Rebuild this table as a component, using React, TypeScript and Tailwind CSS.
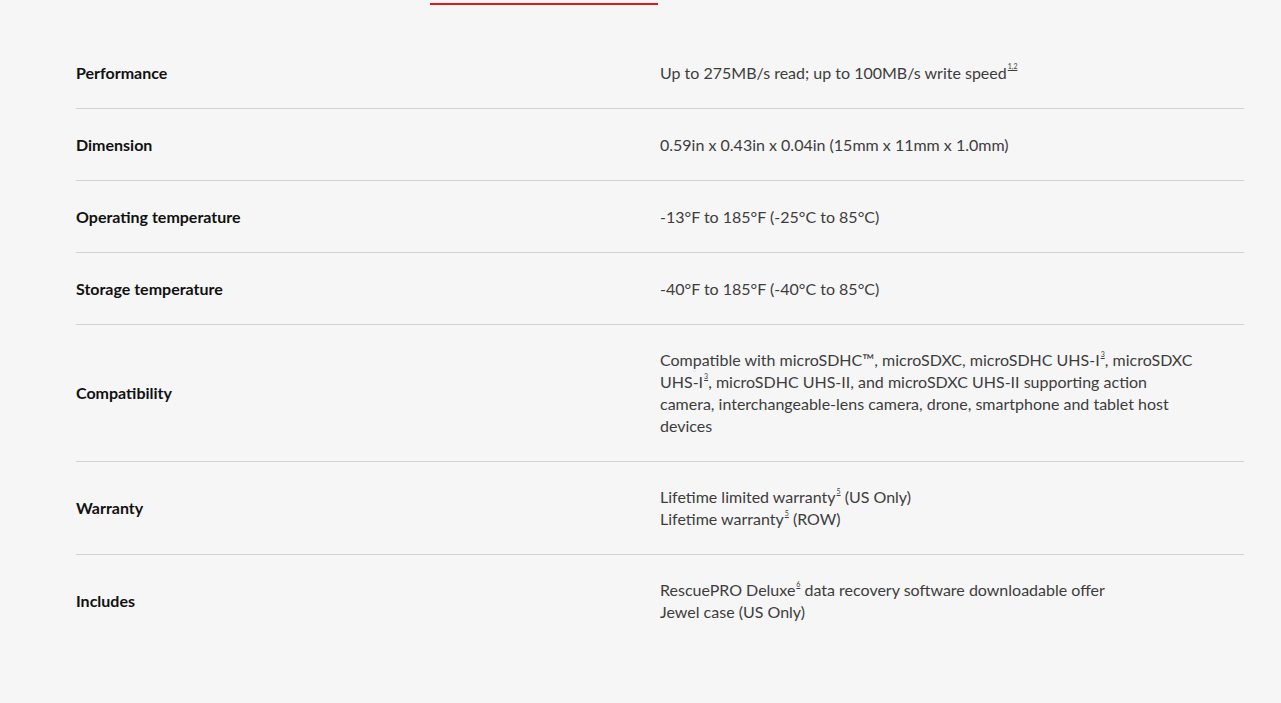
import type { ReactNode } from "react";

type Spec = { label: string; value: ReactNode };

function Note({ n }: { n: string }) {
  return <sup className="ml-[1px] align-top text-[7px] leading-[16px] underline">{n}</sup>;
}

const specs: Spec[] = [
  {
    label: "Performance",
    value: (
      <>
        Up to 275MB/s read; up to 100MB/s write speed
        <Note n="1,2" />
      </>
    ),
  },
  { label: "Dimension", value: "0.59in x 0.43in x 0.04in (15mm x 11mm x 1.0mm)" },
  { label: "Operating temperature", value: "-13°F to 185°F (-25°C to 85°C)" },
  { label: "Storage temperature", value: "-40°F to 185°F (-40°C to 85°C)" },
  {
    label: "Compatibility",
    value: (
      <>
        Compatible with microSDHC™, microSDXC, microSDHC UHS-I
        <Note n="3" />, microSDXC UHS-I
        <Note n="3" />, microSDHC UHS-II, and microSDXC UHS-II supporting action camera,
        interchangeable-lens camera, drone, smartphone and tablet host devices
      </>
    ),
  },
  {
    label: "Warranty",
    value: (
      <>
        <div>
          Lifetime limited warranty
          <Note n="5" /> (US Only)
        </div>
        <div>
          Lifetime warranty
          <Note n="5" /> (ROW)
        </div>
      </>
    ),
  },
  {
    label: "Includes",
    value: (
      <>
        <div>
          RescuePRO Deluxe
          <Note n="6" /> data recovery software downloadable offer
        </div>
        <div>Jewel case (US Only)</div>
      </>
    ),
  },
];

export default function App() {
  return (
    <div className="min-h-[703px] bg-[#f6f6f6] font-['Lato','Liberation_Sans',sans-serif]">
      {/* active tab underline */}
      <div className="pt-[3px] pl-[430px]">
        <div className="h-[2px] w-[228px] bg-[#e3141f]" />
      </div>

      <div className="mx-[76px] mt-[32px] flex w-[1168px] flex-col">
        {specs.map((s, i) => (
          <div
            key={s.label}
            className={`grid grid-cols-2 items-center py-6 ${
              i < specs.length - 1 ? "border-b border-[#d2d2d2]" : ""
            }`}
          >
            <div className="flex min-h-[23px] items-center text-[16px] font-bold leading-[22px] text-[#111111]">
              {s.label}
            </div>
            <div className="max-w-[540px] text-[16px] leading-[22px] text-[#3d3d3d]">{s.value}</div>
          </div>
        ))}
      </div>
    </div>
  );
}
